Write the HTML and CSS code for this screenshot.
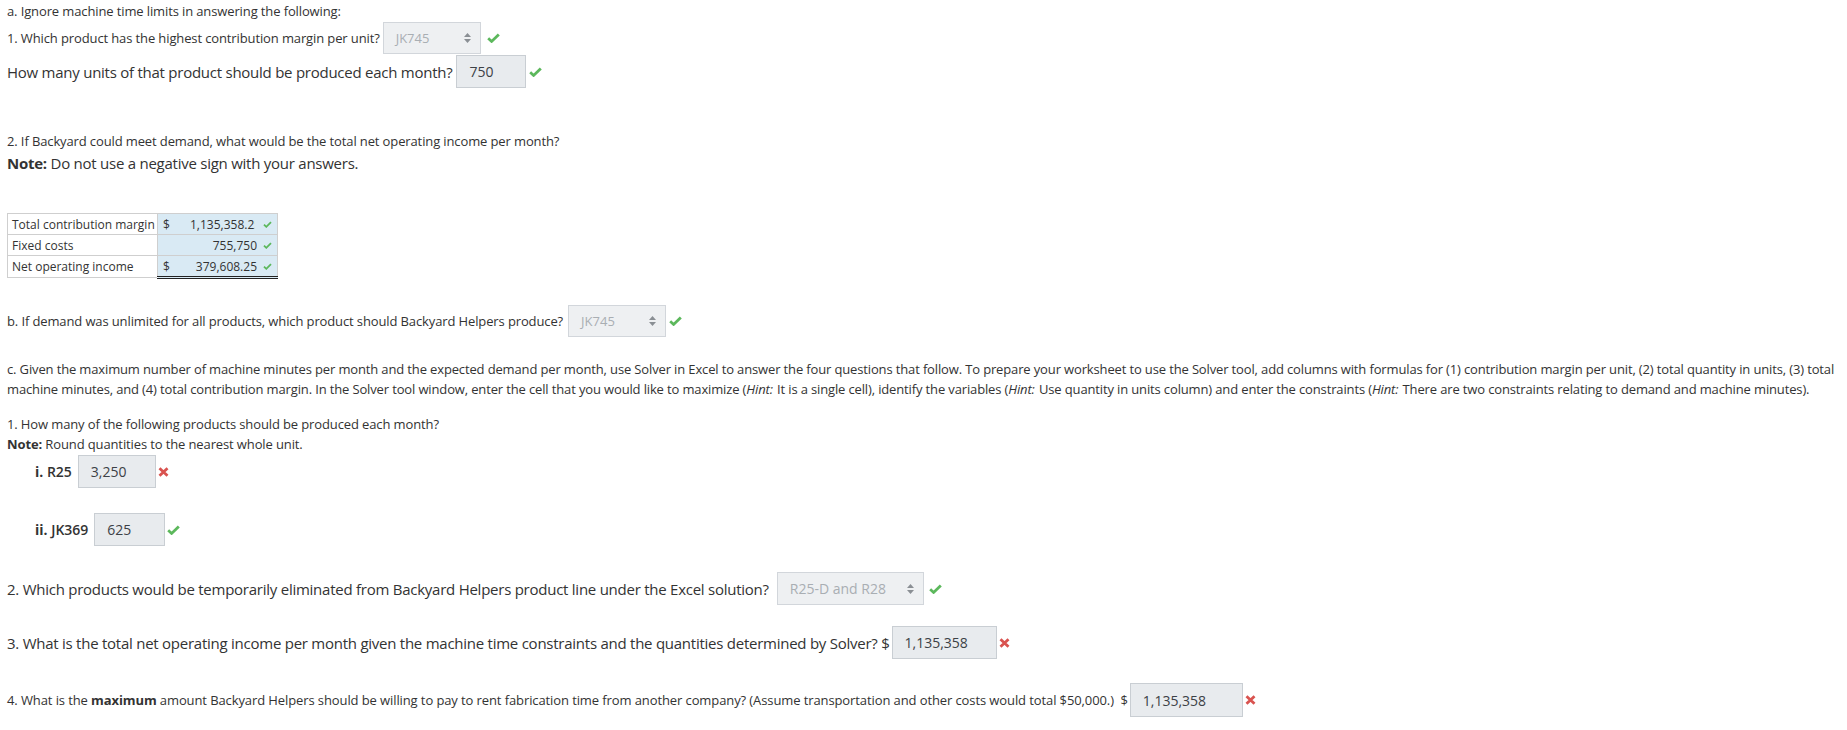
FILE: index.html
```html
<!DOCTYPE html>
<html>
<head>
<meta charset="utf-8">
<link rel="stylesheet" href="styles.css">
</head>
<body>
<div class="page">
  <p class="t13 line-a">a. Ignore machine time limits in answering the following:</p>

  <div class="row row-1">
    <span class="t13">1. Which product has the highest contribution margin per unit?</span>
    <div class="box select sel-1"><span>JK745</span><svg class="arrows" width="7" height="10" viewBox="0 0 7 10"><path d="M3.5 0L7 4H0z M3.5 10L0 6h7z"/></svg></div>
    <svg class="mark check" width="13" height="10" viewBox="0 0 13 10"><path d="M1.2 5.2L4.6 8.4L11.8 1.4"/></svg>
  </div>

  <div class="row row-2">
    <span class="t15">How many units of that product should be produced each month?</span>
    <div class="box input in-750">750</div>
    <svg class="mark check" width="13" height="10" viewBox="0 0 13 10"><path d="M1.2 5.2L4.6 8.4L11.8 1.4"/></svg>
  </div>

  <p class="t13 q2">2. If Backyard could meet demand, what would be the total net operating income per month?</p>
  <p class="t15 note1"><b>Note:</b> Do not use a negative sign with your answers.</p>

  <table class="calc">
    <tr>
      <td class="lbl">Total contribution margin</td>
      <td class="val"><span class="cur">$</span><span class="num clip">1,135,358.25</span><svg class="tick" width="9" height="7" viewBox="0 0 9 7"><path d="M1 3.6L3.3 5.8L8 1.2"/></svg></td>
    </tr>
    <tr>
      <td class="lbl">Fixed costs</td>
      <td class="val"><span class="cur"></span><span class="num">755,750</span><svg class="tick" width="9" height="7" viewBox="0 0 9 7"><path d="M1 3.6L3.3 5.8L8 1.2"/></svg></td>
    </tr>
    <tr class="total">
      <td class="lbl">Net operating income</td>
      <td class="val"><span class="cur">$</span><span class="num">379,608.25</span><svg class="tick" width="9" height="7" viewBox="0 0 9 7"><path d="M1 3.6L3.3 5.8L8 1.2"/></svg></td>
    </tr>
  </table>

  <div class="row row-b">
    <span class="t13">b. If demand was unlimited for all products, which product should Backyard Helpers produce?</span>
    <div class="box select sel-b"><span>JK745</span><svg class="arrows" width="7" height="10" viewBox="0 0 7 10"><path d="M3.5 0L7 4H0z M3.5 10L0 6h7z"/></svg></div>
    <svg class="mark check" width="13" height="10" viewBox="0 0 13 10"><path d="M1.2 5.2L4.6 8.4L11.8 1.4"/></svg>
  </div>

  <p class="t13 para-c">c. Given the maximum number of machine minutes per month and the expected demand per month, use Solver in Excel to answer the four questions that follow. To prepare your worksheet to use the Solver tool, add columns with formulas for (1) contribution margin per unit, (2) total quantity in units, (3) total machine minutes, and (4) total contribution margin. In the Solver tool window, enter the cell that you would like to maximize (<i>Hint:</i> It is a single cell), identify the variables (<i>Hint:</i> Use quantity in units column) and enter the constraints (<i>Hint:</i> There are two constraints relating to demand and machine minutes).</p>

  <p class="t13 q-c1">1. How many of the following products should be produced each month?</p>
  <p class="t13"><b>Note:</b> Round quantities to the nearest whole unit.</p>

  <div class="row row-i">
    <span class="sub-lbl"><b>i.</b> R25</span>
    <div class="box input in-r25">3,250</div>
    <svg class="mark cross" width="11" height="10" viewBox="0 0 11 10"><path d="M1.5 1.2L9.5 8.8M9.5 1.2L1.5 8.8"/></svg>
  </div>

  <div class="row row-ii">
    <span class="sub-lbl"><b>ii.</b> JK369</span>
    <div class="box input in-jk">625</div>
    <svg class="mark check" width="13" height="10" viewBox="0 0 13 10"><path d="M1.2 5.2L4.6 8.4L11.8 1.4"/></svg>
  </div>

  <div class="row row-c2">
    <span class="t15">2. Which products would be temporarily eliminated from Backyard Helpers product line under the Excel solution?</span>
    <div class="box select sel-c2"><span>R25-D and R28</span><svg class="arrows" width="7" height="10" viewBox="0 0 7 10"><path d="M3.5 0L7 4H0z M3.5 10L0 6h7z"/></svg></div>
    <svg class="mark check" width="13" height="10" viewBox="0 0 13 10"><path d="M1.2 5.2L4.6 8.4L11.8 1.4"/></svg>
  </div>

  <div class="row row-c3">
    <span class="t15">3. What is the total net operating income per month given the machine time constraints and the quantities determined by Solver? $</span>
    <div class="box input in-c3">1,135,358</div>
    <svg class="mark cross" width="11" height="10" viewBox="0 0 11 10"><path d="M1.5 1.2L9.5 8.8M9.5 1.2L1.5 8.8"/></svg>
  </div>

  <div class="row row-c4">
    <span class="t13 q-c4">4. What is the <b>maximum</b> amount Backyard Helpers should be willing to pay to rent fabrication time from another company? (Assume transportation and other costs would total $50,000.)&nbsp; $</span>
    <div class="box input in-c4">1,135,358</div>
    <svg class="mark cross" width="11" height="10" viewBox="0 0 11 10"><path d="M1.5 1.2L9.5 8.8M9.5 1.2L1.5 8.8"/></svg>
  </div>
</div>
</body>
</html>
```

FILE: styles.css
```css
html, body {
  margin: 0;
  padding: 0;
  background: #ffffff;
}

body {
  font-family: "Open Sans", "DejaVu Sans", sans-serif;
  color: #333333;
}

.page {
  padding: 1px 2px 0 7px;
}

p {
  margin: 0;
}

b {
  font-weight: 700;
}

.t13 {
  font-size: 13px;
  line-height: 20px;
  letter-spacing: -0.12px;
}

.t15 {
  font-size: 15px;
  line-height: 22px;
  letter-spacing: -0.25px;
}

.row {
  display: flex;
  align-items: center;
}

.box {
  box-sizing: border-box;
  height: 33px;
  border: 1px solid #d2d6db;
  display: flex;
  align-items: center;
  flex: none;
}

.select {
  background: #eef0f2;
  color: #a9aeb3;
  font-size: 13px;
  padding: 0 9px 0 12px;
  justify-content: space-between;
  margin-left: 3px;
}

.arrows path {
  fill: #8a8f94;
}

.input {
  background: #e8ebee;
  border-color: #c9ced3;
  color: #3c4146;
  font-size: 14px;
  padding: 0 12px;
  margin-left: 4px;
}

.mark {
  flex: none;
}

.check path {
  fill: none;
  stroke: #5cb85c;
  stroke-width: 2.8;
}

.cross path {
  fill: none;
  stroke: #d9534f;
  stroke-width: 2.8;
}

/* section a */
.row-1 {
  margin-top: 1px;
}
.sel-1 {
  width: 98px;
  height: 32px;
}
.row-1 .check {
  margin-left: 6px;
}

.row-2 {
  margin-top: 1px;
}
.in-750 {
  width: 70px;
}
.row-2 .check {
  margin-left: 3px;
}

.q2 {
  margin-top: 43px;
}
.note1 {
  margin-top: 1px;
}

/* table */
.calc {
  margin-top: 39px;
  border-collapse: collapse;
  font-size: 12px;
}

.calc td {
  border: 1px solid #cfcfcf;
  height: 20px;
  padding: 0;
}

.calc .lbl {
  width: 145px;
  padding-left: 4px;
  padding-right: 0;
  background: #ffffff;
  white-space: nowrap;
}

.calc .val {
  width: 119px;
  background: #d9eaf4;
}

.val {
  white-space: nowrap;
}

.val .cur {
  display: inline-block;
  width: 22px;
  padding-left: 5px;
  box-sizing: border-box;
  vertical-align: middle;
}

.val .num {
  display: inline-block;
  width: 77px;
  text-align: right;
  overflow: hidden;
  vertical-align: middle;
}

.val .clip {
  width: 65px;
  margin-left: 10px;
  margin-right: 2px;
  text-align: left;
}

.tick {
  vertical-align: middle;
  margin-left: 6px;
}

.tick path {
  fill: none;
  stroke: #5cb85c;
  stroke-width: 1.8;
}

.calc .total .val {
  border-top: 1px solid #111111;
  border-bottom: 3px double #222222;
}

/* section b */
.row-b {
  margin-top: 26px;
}
.sel-b {
  width: 98px;
  height: 32px;
  margin-left: 5px;
}
.row-b .check {
  margin-left: 3px;
}

/* section c */
.para-c {
  margin-top: 22px;
  letter-spacing: -0.14px;
}

.para-c i {
  padding-right: 1px;
}

.q-c1 {
  margin-top: 15px;
}

.sub-lbl {
  font-size: 14px;
  font-weight: 600;
  padding-left: 28px;
}

.sub-lbl b {
  font-weight: 700;
}

.row-i {
  margin-top: 1px;
}
.in-r25 {
  width: 78px;
  margin-left: 6px;
}
.row-i .cross {
  margin-left: 2px;
}

.row-ii {
  margin-top: 25px;
}
.in-jk {
  width: 71px;
  margin-left: 6px;
}
.row-ii .check {
  margin-left: 2px;
}

.row-c2 {
  margin-top: 26px;
}
.sel-c2 {
  width: 147px;
  font-size: 14px;
  margin-left: 8px;
}
.row-c2 .check {
  margin-left: 5px;
}

.row-c3 {
  margin-top: 21px;
}
.in-c3 {
  width: 105px;
  margin-left: 2px;
}
.row-c3 .cross {
  margin-left: 2px;
}

.row-c4 {
  margin-top: 24px;
}
.q-c4 {
  letter-spacing: -0.1px;
}
.in-c4 {
  width: 113px;
  margin-left: 2px;
  height: 34px;
}
.row-c4 .cross {
  margin-left: 2px;
}
```
